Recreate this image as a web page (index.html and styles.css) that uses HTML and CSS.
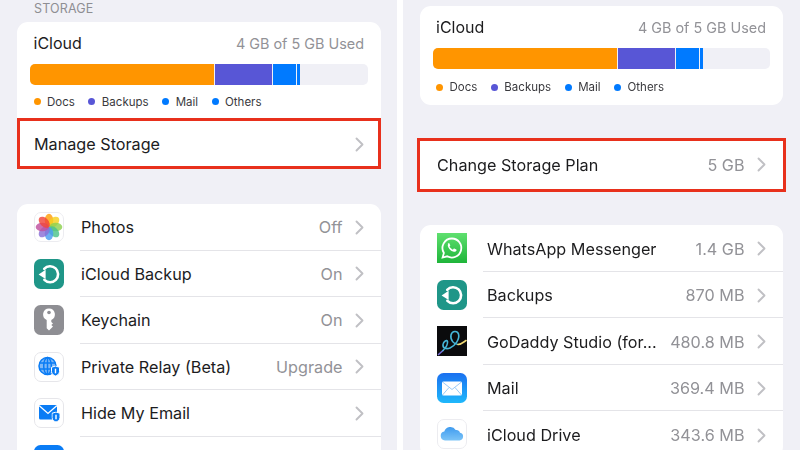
FILE: index.html
```html
<!DOCTYPE html>
<html>
<head lang="en">
    <meta charset="UTF-8">
    <title>iCloud Storage</title>
    <link rel="stylesheet" href="styles.css">
</head>
<body>
<svg class="defs" width="0" height="0">
    <symbol id="chev" viewBox="0 0 9 15">
        <path d="M1.5 1.5 7.5 7.5 1.5 13.5" fill="none" stroke="#c0c0c4" stroke-width="1.9" stroke-linecap="round" stroke-linejoin="round"/>
    </symbol>
    <symbol id="backup" viewBox="0 0 30 30">
        <rect width="30" height="30" rx="6.5" fill="#1f9688"/>
        <path d="M10.2 9.8A8 8 0 1 1 10.4 20.8" fill="none" stroke="#fff" stroke-width="2.6" stroke-linecap="round"/>
        <path d="M4.6 15.4 11.6 10.8V20Z" fill="#fff"/>
    </symbol>
    <symbol id="shield" viewBox="0 0 9 11">
        <path d="M4.5 .5 8.5 1.8V6C8.5 8.5 6.3 9.9 4.5 10.5 2.7 9.9 .5 8.5 .5 6V1.8Z" fill="#0a7cf5" stroke="#fff" stroke-width="1"/>
        <rect x="3.8" y="3.2" width="1.4" height="4.6" fill="#fff"/>
    </symbol>
</svg>
<div class="screens">
    <section class="panel panel-left">
        <h2 class="label">STORAGE</h2>
        <div class="card">
            <div class="usage">
                <div class="usage-head"><span class="usage-name">iCloud</span><span class="usage-used">4 GB of 5 GB Used</span></div>
                <div class="bar">
                    <i class="seg docs"></i><i class="seg backups"></i><i class="seg mail"></i><i class="seg others"></i>
                </div>
                <div class="legend">
                    <span class="key k-docs">Docs</span><span class="key k-backups">Backups</span><span class="key k-mail">Mail</span><span class="key k-others">Others</span>
                </div>
            </div>
            <a class="row row-manage">
                <span class="row-title">Manage Storage</span>
                <svg class="chev"><use href="#chev"/></svg>
            </a>
        </div>
        <div class="card list">
            <a class="item">
                <svg class="icon petals" viewBox="0 0 30 30">
                    <rect x=".5" y=".5" width="29" height="29" rx="6.5" fill="#fff" stroke="#ececf0"/>
                    <ellipse cx="15" cy="8.3" rx="4.3" ry="6.6" fill="#ff9f0a"/>
                    <ellipse cx="15" cy="8.3" rx="4.3" ry="6.6" fill="#f6cf1e" transform="rotate(45 15 15)"/>
                    <ellipse cx="15" cy="8.3" rx="4.3" ry="6.6" fill="#8ed14f" transform="rotate(90 15 15)"/>
                    <ellipse cx="15" cy="8.3" rx="4.3" ry="6.6" fill="#4cc38a" transform="rotate(135 15 15)"/>
                    <ellipse cx="15" cy="8.3" rx="4.3" ry="6.6" fill="#4a9df0" transform="rotate(180 15 15)"/>
                    <ellipse cx="15" cy="8.3" rx="4.3" ry="6.6" fill="#8a6fd6" transform="rotate(225 15 15)"/>
                    <ellipse cx="15" cy="8.3" rx="4.3" ry="6.6" fill="#c04f9f" transform="rotate(270 15 15)"/>
                    <ellipse cx="15" cy="8.3" rx="4.3" ry="6.6" fill="#f0453a" transform="rotate(315 15 15)"/>
                </svg>
                <span class="item-body"><span class="row-title">Photos</span><span class="row-value">Off</span><svg class="chev"><use href="#chev"/></svg></span>
            </a>
            <a class="item">
                <svg class="icon"><use href="#backup"/></svg>
                <span class="item-body"><span class="row-title">iCloud Backup</span><span class="row-value">On</span><svg class="chev"><use href="#chev"/></svg></span>
            </a>
            <a class="item">
                <svg class="icon" viewBox="0 0 30 30">
                    <rect width="30" height="30" rx="6.5" fill="#8e8e93"/>
                    <path d="M15 3.5A6 6 0 0 1 17.3 15V17L19 18.5 17.3 20 19 21.5 17.3 23.2 15 25.5 12.7 23.2V15A6 6 0 0 1 15 3.5Z" fill="#fff"/>
                    <circle cx="15" cy="7.5" r="1.8" fill="#8e8e93"/>
                </svg>
                <span class="item-body"><span class="row-title">Keychain</span><span class="row-value">On</span><svg class="chev"><use href="#chev"/></svg></span>
            </a>
            <a class="item">
                <svg class="icon" viewBox="0 0 30 30">
                    <rect x=".5" y=".5" width="29" height="29" rx="6.5" fill="#fff" stroke="#e6e6ea"/>
                    <g fill="none" stroke="#0a7cf5" stroke-width="1.5">
                        <circle cx="13.5" cy="14" r="8.5" fill="#7fb8f7"/>
                        <ellipse cx="13.5" cy="14" rx="3.8" ry="8.5"/>
                        <path d="M5.5 11h16M5.5 17h16M13.5 5.5v17"/>
                    </g>
                    <use href="#shield" x="17" y="13.5" width="9" height="11"/>
                </svg>
                <span class="item-body"><span class="row-title">Private Relay (Beta)</span><span class="row-value">Upgrade</span><svg class="chev"><use href="#chev"/></svg></span>
            </a>
            <a class="item">
                <svg class="icon" viewBox="0 0 30 30">
                    <rect x=".5" y=".5" width="29" height="29" rx="6.5" fill="#fff" stroke="#e6e6ea"/>
                    <rect x="5" y="7" width="18" height="14.5" rx="1.5" fill="#0a7cf5"/>
                    <path d="M5.3 7.7 14 15.5 22.7 7.7" fill="none" stroke="#fff" stroke-width="1.3"/>
                    <use href="#shield" x="17.5" y="13.5" width="9" height="11"/>
                </svg>
                <span class="item-body"><span class="row-title">Hide My Email</span><svg class="chev"><use href="#chev"/></svg></span>
            </a>
            <a class="item">
                <svg class="icon" viewBox="0 0 30 30"><rect width="30" height="30" rx="6.5" fill="#0a7cf5"/></svg>
                <span class="item-body"></span>
            </a>
        </div>
    </section>
    <section class="panel panel-right">
        <div class="card card-usage">
            <div class="usage">
                <div class="usage-head"><span class="usage-name">iCloud</span><span class="usage-used">4 GB of 5 GB Used</span></div>
                <div class="bar">
                    <i class="seg docs"></i><i class="seg backups"></i><i class="seg mail"></i><i class="seg others"></i>
                </div>
                <div class="legend">
                    <span class="key k-docs">Docs</span><span class="key k-backups">Backups</span><span class="key k-mail">Mail</span><span class="key k-others">Others</span>
                </div>
            </div>
        </div>
        <a class="card row row-plan">
            <span class="row-title">Change Storage Plan</span>
            <span class="row-value">5 GB</span>
            <svg class="chev"><use href="#chev"/></svg>
        </a>
        <div class="card list list-apps">
            <a class="item">
                <svg class="icon" viewBox="0 0 30 30">
                    <defs><linearGradient id="wa" x1="0" y1="0" x2="0" y2="1"><stop offset="0" stop-color="#5fe06f"/><stop offset="1" stop-color="#1fb53a"/></linearGradient></defs>
                    <rect width="30" height="30" fill="url(#wa)"/>
                    <path d="M15 5.5A9.5 9.5 0 0 0 6.9 20L5.6 24.5 10.2 23.3A9.5 9.5 0 1 0 15 5.5Z" fill="none" stroke="#fff" stroke-width="1.8"/>
                    <path d="M11.7 10.3c-1 .9-1.2 2.3-.4 3.9 1 2 2.7 3.6 4.8 4.4 1.5.5 2.8.1 3.4-1 .2-.5.1-.8-.2-1l-2-1c-.3-.1-.5 0-.7.2l-.7.9c-1.5-.6-2.7-1.7-3.4-3.1l.6-.7c.2-.3.2-.5.1-.7l-.8-1.8c-.2-.4-.4-.4-.7-.4-.5 0-.8.1-1.4.3Z" fill="#fff"/>
                </svg>
                <span class="item-body"><span class="row-title">WhatsApp Messenger</span><span class="row-value">1.4 GB</span><svg class="chev"><use href="#chev"/></svg></span>
            </a>
            <a class="item">
                <svg class="icon"><use href="#backup"/></svg>
                <span class="item-body"><span class="row-title">Backups</span><span class="row-value">870 MB</span><svg class="chev"><use href="#chev"/></svg></span>
            </a>
            <a class="item">
                <svg class="icon" viewBox="0 0 30 30">
                    <rect width="30" height="30" fill="#0b0b0d"/>
                    <g fill="none" stroke-width="1.6" stroke-linecap="round">
                        <path d="M1.5 28.5 6 24.5" stroke="#7a6fd8"/>
                        <path d="M6 24.5C8.5 22 11 18.5 10.5 15.5 10 13.5 6.5 15 6 18.5 5.5 22 9 23.5 13 22 18 20 23 13 21.5 8 20.5 4.5 15 4.5 14 9 13 14 17 18.5 21 18.5" stroke="#45b6d8"/>
                        <path d="M21 18.5C24 18.5 26 16.5 29 14.5" stroke="#efd873"/>
                    </g>
                </svg>
                <span class="item-body"><span class="row-title">GoDaddy Studio (for...</span><span class="row-value">480.8 MB</span><svg class="chev"><use href="#chev"/></svg></span>
            </a>
            <a class="item">
                <svg class="icon" viewBox="0 0 30 30">
                    <defs><linearGradient id="ml" x1="0" y1="0" x2="0" y2="1"><stop offset="0" stop-color="#1b70f0"/><stop offset="1" stop-color="#1fb8fb"/></linearGradient></defs>
                    <rect width="30" height="30" rx="6.5" fill="url(#ml)"/>
                    <rect x="5" y="8.5" width="20" height="14" rx="1.5" fill="#fff"/>
                    <path d="M5.5 9 15 16.5 24.5 9M5.5 22 12 14.5M24.5 22 18 14.5" fill="none" stroke="#7fbdf5" stroke-width=".8"/>
                </svg>
                <span class="item-body"><span class="row-title">Mail</span><span class="row-value">369.4 MB</span><svg class="chev"><use href="#chev"/></svg></span>
            </a>
            <a class="item">
                <svg class="icon" viewBox="0 0 30 30">
                    <defs><linearGradient id="cl" x1="0" y1="0" x2="0" y2="1"><stop offset="0" stop-color="#3f9bef"/><stop offset="1" stop-color="#7cc4f7"/></linearGradient></defs>
                    <rect x=".5" y=".5" width="29" height="29" rx="6.5" fill="#fff" stroke="#ececf0"/>
                    <path d="M8 21.5A4.5 4.5 0 0 1 7.3 12.6 6.3 6.3 0 0 1 18.7 11 4 4 0 0 1 23 13.8 3.9 3.9 0 0 1 22.5 21.5Z" fill="url(#cl)"/>
                </svg>
                <span class="item-body"><span class="row-title">iCloud Drive</span><span class="row-value">343.6 MB</span><svg class="chev"><use href="#chev"/></svg></span>
            </a>
        </div>
    </section>
</div>
</body>
</html>
```

FILE: styles.css
```css
*{
    margin: 0;
    padding: 0;
    box-sizing: border-box;
}
body{
    width: 800px;
    height: 450px;
    overflow: hidden;
    background: #fff;
    font-family: Inter, "Liberation Sans", sans-serif;
    color: #1c1c1e;
}
.defs{
    display: none;
}
/* the source is a soft, upscaled photo */
.screens{
    display: flex;
    justify-content: space-between;
    height: 450px;
    filter: blur(.5px);
}
.panel{
    width: 397px;
    height: 450px;
    overflow: hidden;
    background: #f0f0f6;
}
.panel-left{
    padding: 0 16px 0 17px;
}
.panel-right{
    padding: 6px 17px 0 17px;
}
.label{
    height: 22px;
    padding: 1px 0 0 17px;
    font-size: 12.5px;
    font-weight: 400;
    line-height: 16px;
    letter-spacing: .15px;
    color: #8e8e93;
}
.card{
    display: block;
    background: #fff;
    border-radius: 11px;
}
.usage{
    padding: 0 13px;
}
.card-usage .usage{
    padding-left: 12.5px;
}
.usage-head{
    display: flex;
    justify-content: space-between;
    align-items: center;
    height: 42px;
    padding: 0 4px 0 3.5px;
}
.usage-name{
    font-size: 16px;
}
.usage-used{
    font-size: 14.4px;
    color: #929297;
}
.bar{
    display: flex;
    height: 21px;
    border-radius: 5px;
    overflow: hidden;
    background: #f0f0f6;
}
.seg{
    display: block;
    height: 100%;
    margin-right: 1px;
}
.docs{
    width: 184px;
    background: #ff9500;
}
.backups{
    width: 57px;
    background: #5856d6;
}
.mail{
    width: 23px;
    background: #007aff;
}
.others{
    width: 3px;
    background: #007aff;
}
.legend{
    display: flex;
    height: 33px;
    align-items: center;
    padding-left: 3.5px;
    font-size: 11.5px;
    color: #3a3a3e;
}
.card-usage .legend{
    height: 36px;
}
.key{
    display: flex;
    align-items: center;
    gap: 6.5px;
    margin-right: 13.5px;
}
.key::before{
    content: "";
    width: 7px;
    height: 7px;
    border-radius: 50%;
}
.k-docs::before{
    background: #ff9500;
}
.k-backups::before{
    background: #5856d6;
}
.k-mail::before,
.k-others::before{
    background: #007aff;
}
.row{
    display: flex;
    align-items: center;
    padding: 1px 17.5px 0 17px;
}
.row-title{
    flex: 1;
    font-size: 16.2px;
    white-space: nowrap;
}
.row-value{
    margin-right: 12px;
    font-size: 16.2px;
    color: #929297;
}
.chev{
    flex: none;
    width: 9px;
    height: 15px;
}
.row-manage{
    height: 51px;
    outline: 3px solid #e8301c;
    outline-offset: -3px;
}
.row-plan{
    height: 48px;
    margin: 35.5px 0 36.5px;
    border-radius: 0;
    padding-top: 0;
    outline: 3px solid #e8301c;
}
.list{
    margin-top: 35px;
}
.item{
    display: flex;
    align-items: center;
    height: 46.5px;
    padding-left: 17px;
}
.icon{
    flex: none;
    width: 30px;
    height: 30px;
    margin-right: 16px;
}
.petals ellipse{
    opacity: .82;
}
.item-body{
    display: flex;
    flex: 1;
    align-items: center;
    height: 100%;
    padding: 1px 17.5px 0 1px;
    border-bottom: 1px solid #e4e4e8;
}
.item:last-child .item-body{
    border-bottom: 0;
}
.list-apps{
    margin-top: 36.5px;
}
.list-apps .item-body{
    padding: 2px 17.5px 0 4px;
}
```
